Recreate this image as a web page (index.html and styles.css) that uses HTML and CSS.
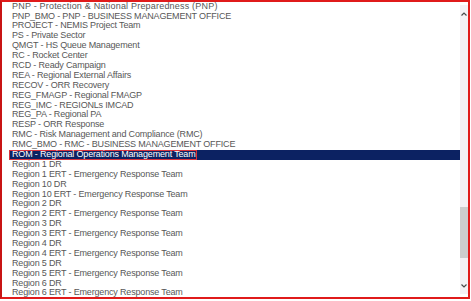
FILE: index.html
```
<!DOCTYPE html>
<html>
<head>
<meta charset="utf-8">
<link rel="stylesheet" href="styles.css">
</head>
<body>
<div class="frame">
  <ul class="list">
    <li class="wide">PNP - Protection &amp; National Preparedness (PNP)</li>
    <li>PNP_BMO - PNP - BUSINESS MANAGEMENT OFFICE</li>
    <li>PROJECT - NEMIS Project Team</li>
    <li>PS - Private Sector</li>
    <li>QMGT - HS Queue Management</li>
    <li>RC - Rocket Center</li>
    <li>RCD - Ready Campaign</li>
    <li>REA - Regional External Affairs</li>
    <li>RECOV - ORR Recovery</li>
    <li>REG_FMAGP - Regional FMAGP</li>
    <li>REG_IMC - REGIONLs IMCAD</li>
    <li>REG_PA - Regional PA</li>
    <li>RESP - ORR Response</li>
    <li>RMC - Risk Management and Compliance (RMC)</li>
    <li>RMC_BMO - RMC - BUSINESS MANAGEMENT OFFICE</li>
    <li class="selected"><span class="mark">ROM - Regional Operations Management Team</span></li>
    <li>Region 1 DR</li>
    <li>Region 1 ERT - Emergency Response Team</li>
    <li>Region 10 DR</li>
    <li>Region 10 ERT - Emergency Response Team</li>
    <li>Region 2 DR</li>
    <li>Region 2 ERT - Emergency Response Team</li>
    <li>Region 3 DR</li>
    <li>Region 3 ERT - Emergency Response Team</li>
    <li>Region 4 DR</li>
    <li>Region 4 ERT - Emergency Response Team</li>
    <li>Region 5 DR</li>
    <li>Region 5 ERT - Emergency Response Team</li>
    <li>Region 6 DR</li>
    <li>Region 6 ERT - Emergency Response Team</li>
  </ul>
  <div class="scrollbar">
    <div class="sb-btn">
      <svg width="6" height="4" viewBox="0 0 6 4"><polyline points="0.5,3.5 3,1 5.5,3.5" fill="none" stroke="#4a4a4a" stroke-width="1.2"/></svg>
    </div>
    <div class="sb-track"><div class="sb-thumb"></div></div>
    <div class="sb-btn">
      <svg width="6" height="4" viewBox="0 0 6 4"><polyline points="0.5,0.5 3,3 5.5,0.5" fill="none" stroke="#4a4a4a" stroke-width="1.2"/></svg>
    </div>
  </div>
</div>
</body>
</html>
```
FILE: styles.css
```
html, body {
  margin: 0;
  padding: 0;
  background: #ffffff;
}

.frame {
  box-sizing: border-box;
  width: 470px;
  height: 299px;
  border: 2px solid #e01b1b;
  border-left-color: #c81414;
  display: flex;
  overflow: hidden;
  background: #ffffff;
}

.list {
  flex: 1;
  list-style: none;
  margin: -0.4px 0 0 7px;
  padding: 0;
  overflow: hidden;
  font-family: "Liberation Sans", Arial, sans-serif;
  font-size: 9px;
  line-height: 9.9px;
  letter-spacing: -0.17px;
  color: #575757;
}

.list li {
  height: 9.9px;
  padding-left: 3px;
  white-space: nowrap;
}

.list li.wide {
  letter-spacing: 0.2px;
}

.list li.selected {
  padding-left: 0;
  background: #0c2262;
  color: #ffffff;
}

.mark {
  display: inline-block;
  height: 9.9px;
  padding: 0 2px 0 3px;
  box-sizing: border-box;
  box-shadow: inset 0 0 0 1px #d8343c;
}

.scrollbar {
  width: 8px;
  margin: 3px 0;
  background: #f4f1f5;
  display: flex;
  flex-direction: column;
}

.sb-btn {
  height: 17px;
  display: flex;
  align-items: center;
  justify-content: center;
}

.sb-track {
  flex: 1;
}

.sb-thumb {
  margin-top: 185px;
  height: 51px;
  background: #cdcdcd;
}
```
